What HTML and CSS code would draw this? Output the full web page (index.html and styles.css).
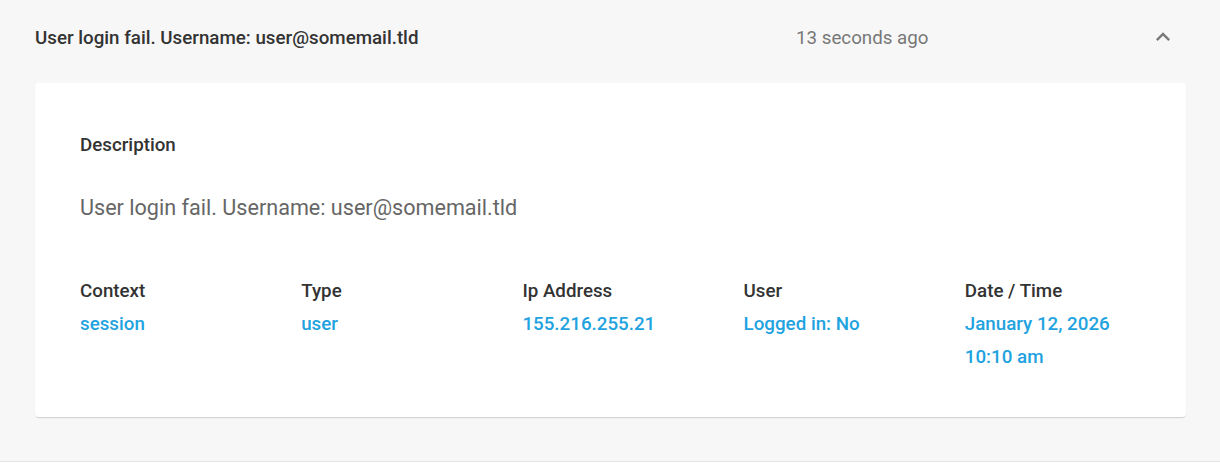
FILE: index.html
```html
<!DOCTYPE html>
<html lang="en">
<head>
    <meta charset="UTF-8">
    <meta name="viewport" content="width=device-width, initial-scale=1.0">
    <title>Activity log</title>
    <link rel="stylesheet" href="styles.css">
</head>
<body>
    <div class="log-item">
        <div class="log-header">
            <div class="log-title">User login fail. Username: user@somemail.tld</div>
            <div class="log-time">13 seconds ago</div>
            <svg class="log-toggle" viewBox="0 0 24 24" width="28" height="28">
                <path d="M12 8l-6 6 1.41 1.41L12 10.83l4.59 4.58L18 14z"/>
            </svg>
        </div>

        <div class="log-card">
            <div class="label">Description</div>
            <p class="description">User login fail. Username: user@somemail.tld</p>

            <div class="details">
                <div class="detail">
                    <div class="label">Context</div>
                    <div class="value">session</div>
                </div>
                <div class="detail">
                    <div class="label">Type</div>
                    <div class="value">user</div>
                </div>
                <div class="detail">
                    <div class="label">Ip Address</div>
                    <div class="value">155.216.255.21</div>
                </div>
                <div class="detail">
                    <div class="label">User</div>
                    <div class="value">Logged in: No</div>
                </div>
                <div class="detail">
                    <div class="label">Date / Time</div>
                    <div class="value">January 12, 2026<br>10:10 am</div>
                </div>
            </div>
        </div>
    </div>
</body>
</html>
```

FILE: styles.css
```css
* {
    margin: 0;
    padding: 0;
    box-sizing: border-box;
}

body {
    font-family: Roboto, 'Liberation Sans', Arial, sans-serif;
    background: #ffffff;
    color: #333333;
}

.log-item {
    background: #f7f7f7;
    border-bottom: 1px solid #e4e4e4;
    padding: 0 34px 44px 35px;
}

/* header row */
.log-header {
    display: flex;
    align-items: flex-start;
    padding: 22px 9px 28px 0;
}

.log-title {
    flex: 1;
    font-size: 18.75px;
    font-weight: 500;
    line-height: 33px;
    color: #333333;
}

.log-time {
    width: 353px;
    font-size: 18.75px;
    line-height: 33px;
    color: #777777;
}

.log-toggle {
    fill: #7a7a7a;
    flex-shrink: 0;
    margin-top: 1px;
}

/* card */
.log-card {
    background: #ffffff;
    border-radius: 4px;
    padding: 46px 0 43px 45px;
    box-shadow: 0 2px 1px -1px rgba(0, 0, 0, 0.12), 0 1px 2px rgba(0, 0, 0, 0.06);
}

.label {
    font-size: 18.75px;
    font-weight: 500;
    line-height: 33px;
    color: #333333;
}

.description {
    margin-top: 29px;
    font-size: 21.6px;
    line-height: 33px;
    color: #666666;
}

.details {
    display: grid;
    grid-template-columns: repeat(5, 1fr);
    margin-top: 51px;
}

.value {
    font-size: 18.75px;
    font-weight: 500;
    line-height: 33px;
    color: #1fa3e0;
}
```
